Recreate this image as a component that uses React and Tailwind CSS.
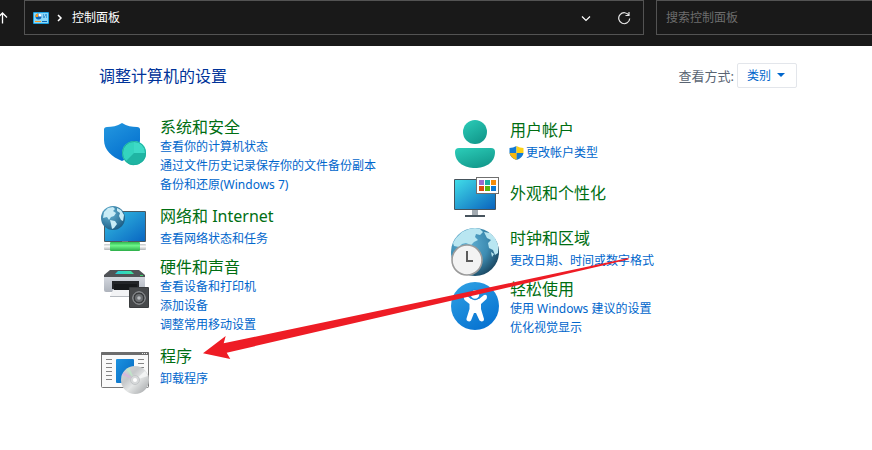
import React from "react";

const iconClass = "block w-12 h-[51px] shrink-0";

function Continents() {
  return (
    <g fill="#c9ecf6">
      <path d="M3 6 L7 2 L12 1 L14 3 L12 5 L15 7 L13 10 L10 11 L8 14 L6 11 L2 12 Z" />
      <path d="M9 14 L14 15 L16 18 L13 22 L11 23 L10 18 Z" />
      <path d="M16 2 L20 4 L23 9 L22 15 L20 14 L18 10 L19 7 L16 5 Z" />
    </g>
  );
}

function ShieldIcon() {
  return (
    <svg className={iconClass} viewBox="0 0 48 51" aria-hidden="true">
      <defs>
        <linearGradient id="shieldBlue" x1="0" y1="0" x2="0.6" y2="1">
          <stop offset="0" stopColor="#2498e0" />
          <stop offset="1" stopColor="#0470ce" />
        </linearGradient>
      </defs>
      <path d="M21 6 C26 9.500 31 10 36 10 Q39 10 39 12.500 V23 C39 33 31 40 21 44 C11 40 3 33 3 23 V12.500 Q3 10 6 10 C11 10 16 9.500 21 6 Z" fill="url(#shieldBlue)" />
      <circle cx="33" cy="36" r="12" fill="#34d4bf" />
      <path d="M33 24 A12 12 0 0 1 45 36 H33 Z" fill="#3ddac6" />
      <path d="M33 36 H45 A12 12 0 0 1 24.500 44.500 Z" fill="#1fb5a3" />
      <circle cx="33" cy="36" r="11.500" fill="none" stroke="#1fae9c" />
    </svg>
  );
}

function NetworkIcon() {
  return (
    <svg className={iconClass} viewBox="0 0 48 51" aria-hidden="true">
      <defs>
        <linearGradient id="netScreen" x1="0" y1="0" x2="1" y2="1">
          <stop offset="0" stopColor="#35bfe2" />
          <stop offset="1" stopColor="#0966c2" />
        </linearGradient>
        <radialGradient id="netGlobe" cx="0.35" cy="0.3" r="0.8">
          <stop offset="0" stopColor="#68b7d8" />
          <stop offset="1" stopColor="#17577f" />
        </radialGradient>
        <linearGradient id="netCable" x1="0" y1="0" x2="0" y2="1">
          <stop offset="0" stopColor="#2fb94f" />
          <stop offset="0.4" stopColor="#6df589" />
          <stop offset="1" stopColor="#2cae48" />
        </linearGradient>
        <linearGradient id="netPipe" x1="0" y1="0" x2="0" y2="1">
          <stop offset="0" stopColor="#bfc3c5" />
          <stop offset="0.4" stopColor="#fafafa" />
          <stop offset="1" stopColor="#b0b4b7" />
        </linearGradient>
      </defs>
      <rect x="3" y="5" width="42" height="31" rx="1" fill="#4b5960" />
      <rect x="4" y="6" width="40" height="29" fill="url(#netScreen)" />
      <rect x="21" y="35" width="6" height="3" fill="#707b80" />
      <rect x="3" y="38" width="42" height="6" rx="1" fill="url(#netPipe)" />
      <rect x="9" y="36" width="30" height="9" rx="1" fill="url(#netCable)" />
      <circle cx="12" cy="12" r="12" fill="url(#netGlobe)" />
      <Continents />
    </svg>
  );
}

function PrinterIcon() {
  return (
    <svg className={iconClass} viewBox="0 0 48 51" aria-hidden="true">
      <defs>
        <linearGradient id="printBody" x1="0" y1="0" x2="0" y2="1">
          <stop offset="0" stopColor="#d3d7de" />
          <stop offset="1" stopColor="#aeb3bc" />
        </linearGradient>
        <linearGradient id="printGlow" x1="0" y1="0" x2="1" y2="0">
          <stop offset="0" stopColor="#28c9d8" />
          <stop offset="1" stopColor="#3ee49c" />
        </linearGradient>
      </defs>
      <path d="M9 13 H38 L44 18 V21 H3 V18 Z" fill="#505357" />
      <path d="M17 14 H30 L33 17 H14 Z" fill="url(#printGlow)" />
      <path d="M3 20 H44 V33 Q44 35 42 35 H5 Q3 35 3 33 Z" fill="url(#printBody)" />
      <rect x="39" y="18" width="3" height="1" fill="#3fd06a" />
      <rect x="11" y="24" width="27" height="8" fill="#232528" />
      <rect x="13" y="27" width="23" height="8" fill="#17191b" />
      <path d="M12 33 H29 V39 H9 Z" fill="#f2f3f5" />
      <path d="M9 39 H29 V40 H9 Z" fill="#b5b9bf" />
      <rect x="28" y="30" width="20" height="21" rx="1" fill="#393b3d" />
      <rect x="29" y="31" width="18" height="19" fill="#47494b" />
      <circle cx="38" cy="41" r="6.200" fill="#3a3c3e" stroke="#a5a8ab" />
      <circle cx="38" cy="41" r="4" fill="#6c6f72" />
      <circle cx="38" cy="41" r="1.800" fill="#b9bcbf" />
    </svg>
  );
}

function ProgramsIcon() {
  return (
    <svg className={iconClass} viewBox="0 0 48 51" aria-hidden="true">
      <defs>
        <linearGradient id="progBlue" x1="0" y1="0" x2="1" y2="1">
          <stop offset="0" stopColor="#1b92e0" />
          <stop offset="1" stopColor="#0667bf" />
        </linearGradient>
        <linearGradient id="progDisc" x1="0" y1="0" x2="1" y2="1">
          <stop offset="0" stopColor="#d8dadb" />
          <stop offset="0.35" stopColor="#c6c8ca" />
          <stop offset="0.55" stopColor="#e4e6e6" />
          <stop offset="1" stopColor="#9ea1a3" />
        </linearGradient>
      </defs>
      <rect x="0.500" y="6.500" width="47" height="35" rx="1" fill="#fafafa" stroke="#777" />
      <path d="M0 9 V7 Q0 6 1 6 H47 Q48 6 48 7 V9 Z" fill="#6d6d6d" />
      <path d="M41 7.500 H46" stroke="#eee" strokeDasharray="1 1" />
      <path d="M5 13.500 H11 M5 17.500 H11 M5 21.500 H11 M5 25.500 H11 M5 29.500 H11 M5 33.500 H11 M37 13.500 H43 M37 17.500 H43 M38 21.500 H43" stroke="#858585" />
      <rect x="15" y="13" width="18" height="24" rx="1" fill="url(#progBlue)" />
      <circle cx="34" cy="34" r="14" fill="url(#progDisc)" />
      <path d="M34 34 L21 29 L23 26 Z" fill="#d9b3dc" opacity="0.8" />
      <path d="M34 34 L25 23.500 L28 21.500 Z" fill="#bfe8c8" opacity="0.8" />
      <path d="M34 34 L44 25 L47 30 Z" fill="#f6f7f7" opacity="0.8" />
      <circle cx="34" cy="34" r="4.500" fill="#d7d9da" stroke="#c3c6c8" />
      <circle cx="34" cy="34" r="2" fill="#fff" />
    </svg>
  );
}

function UserIcon() {
  return (
    <svg className={iconClass} viewBox="0 0 48 51" aria-hidden="true">
      <defs>
        <linearGradient id="userTeal" x1="0.1" y1="0" x2="0.7" y2="1">
          <stop offset="0" stopColor="#2bcbb7" />
          <stop offset="1" stopColor="#12988b" />
        </linearGradient>
      </defs>
      <circle cx="24" cy="12" r="12" fill="url(#userTeal)" />
      <path d="M8 28 H40 Q44 28 44 32 C44 43 34 48 24 48 C14 48 4 43 4 32 Q4 28 8 28 Z" fill="url(#userTeal)" />
    </svg>
  );
}

function AppearanceIcon() {
  return (
    <svg className={iconClass} viewBox="0 0 48 51" aria-hidden="true">
      <defs>
        <linearGradient id="appScreen" x1="0" y1="0" x2="1" y2="1">
          <stop offset="0" stopColor="#40dce8" />
          <stop offset="1" stopColor="#0a63bd" />
        </linearGradient>
      </defs>
      <rect x="21" y="39" width="6" height="5" fill="#a3abb1" />
      <rect x="14" y="44" width="20" height="2" fill="#47545d" />
      <rect x="3" y="8" width="42" height="31" rx="1" fill="#45535c" />
      <rect x="4" y="9" width="40" height="29" fill="url(#appScreen)" />
      <rect x="25.500" y="6.500" width="22" height="16" fill="#fff" stroke="#6f6f6f" />
      <rect x="28" y="9" width="5" height="5" fill="#9a6bd0" />
      <rect x="34" y="9" width="5" height="5" fill="#19b0a2" />
      <rect x="40" y="9" width="5" height="5" fill="#f48c0a" />
      <rect x="28" y="15" width="5" height="5" fill="#dc4a10" />
      <rect x="34" y="15" width="5" height="5" fill="#5bb40d" />
      <rect x="40" y="15" width="5" height="5" fill="#0a78d4" />
    </svg>
  );
}

function ClockIcon() {
  return (
    <svg className={iconClass} viewBox="0 0 48 51" aria-hidden="true">
      <defs>
        <radialGradient id="clockGlobe" cx="0.35" cy="0.35" r="0.7">
          <stop offset="0" stopColor="#61b1d4" />
          <stop offset="0.6" stopColor="#3d8cb2" />
          <stop offset="1" stopColor="#1c4b66" />
        </radialGradient>
      </defs>
      <circle cx="24" cy="24" r="24" fill="url(#clockGlobe)" />
      <g fill="#b9e6f1">
        <path d="M5 10 L11 4 L18 1 L24 0 L29 1 L32 4 L29 7 L25 6 L24 9 L27 12 L23 14 L20 17 L15 15 L11 16 L8 19 L3 18 L2 15 Z" />
        <path d="M33 4 L39 5 L44 10 L47 17 L47 25 L44 27 L42 22 L38 20 L37 15 L40 12 L36 10 Z" />
        <path d="M40 24 L43 26 L41 29 Z" />
      </g>
      <circle cx="16" cy="32" r="15" fill="#f3f3f3" stroke="#9b9b9b" strokeWidth="1.600" />
      <path d="M16 23 V33 H22" fill="none" stroke="#5c5c5c" strokeWidth="2" />
    </svg>
  );
}

function EaseIcon() {
  return (
    <svg className={iconClass} viewBox="0 0 48 51" aria-hidden="true">
      <defs>
        <linearGradient id="easeBlue" x1="0.2" y1="0" x2="0.8" y2="1">
          <stop offset="0" stopColor="#2d9fe3" />
          <stop offset="1" stopColor="#0470d0" />
        </linearGradient>
      </defs>
      <circle cx="24" cy="27" r="24" fill="url(#easeBlue)" />
      <path d="M12.500 18 Q13 16 15.500 16.500 L20 20 H28 L33 16 Q36 15 36 18 L35.500 20 L30 25 V30 L33 40 Q33 42.500 30.500 42.500 L28.500 41.500 L25 34 H23 L20 41.500 Q18.500 43 16.500 42 Q15 41 15.500 39.500 L18.500 30 V25 L13.500 21 Z" fill="#fff" />
      <circle cx="24" cy="15.500" r="5" fill="#fff" stroke="#1c8bda" strokeWidth="1.500" />
    </svg>
  );
}

function UacShield() {
  return (
    <svg className="mr-0.5 -ml-px block h-[14px] w-[15px] shrink-0" viewBox="0 0 15 14" aria-hidden="true">
      <path d="M7.500 0 Q4 2 0.500 2 V7 Q1 11.500 7.500 14 Z" fill="#137ad3" />
      <path d="M7.500 0 Q11 2 14.500 2 V7 H7.500 Z" fill="#fcd116" />
      <path d="M14.500 7 Q14 11.500 7.500 14 V7 Z" fill="#137ad3" />
      <path d="M0.500 7 H7.500 V14 Q1.500 11.500 0.500 7 Z" fill="#f7b80c" />
    </svg>
  );
}

function ControlPanelIcon() {
  return (
    <svg className="block h-3 w-4 shrink-0" viewBox="0 0 16 12" aria-hidden="true">
      <rect width="16" height="12" rx="1" fill="#1ba0e2" />
      <rect x="1" y="1" width="14" height="10" fill="#8ad8f7" />
      <circle cx="5.500" cy="4.500" r="3" fill="#0b64b8" />
      <path d="M5.500 4.500 V1.500 A3 3 0 0 1 8.500 4.500 Z" fill="#fff" />
      <path d="M5 5 V1.500 A3 3 0 0 0 2.500 5 Z" fill="#f79a1e" />
      <path d="M10 3 H11 M12 3 H14 M10 5 H12 M13 5 H14" stroke="#0b64b8" />
      <rect x="2" y="9" width="6" height="1" fill="#f79a1e" />
      <rect x="9" y="9" width="5" height="1" fill="#0b64b8" />
    </svg>
  );
}

function Category({ icon, title, links, pad = "" }) {
  const several = links.length > 1;
  return (
    <section className={"flex min-h-[51px] gap-[11px] " + pad}>
      {icon}
      <div className="min-w-0">
        <h2 className="text-base leading-5">
          <a href="#" className="text-[#006e12] hover:underline">{title}</a>
        </h2>
        <ul className={several ? "" : "pt-[3px]"}>
          {links.map((link) => (
            <li key={link.text} className="text-xs leading-[19px]">
              <a href="#" className="flex items-center whitespace-nowrap text-[#0066cc] hover:underline">
                {link.shield && <UacShield />}
                {link.text}
              </a>
            </li>
          ))}
        </ul>
      </div>
    </section>
  );
}

export default function App() {
  return (
    <div className="relative min-h-screen overflow-hidden bg-white font-['Noto_Sans','Noto_Sans_CJK_SC',sans-serif]">
      <header className="flex h-[46px] items-start bg-[#191919] text-xs text-white">
        <button type="button" aria-label="上移" className="h-[35px] w-6 shrink-0">
          <svg className="-ml-1 block h-3 w-3" viewBox="0 0 12 12" fill="none" stroke="#fff" strokeWidth="1.300" aria-hidden="true">
            <path d="M6.500 11.500 V1 M2 5.500 L6.500 1 L11 5.500" />
          </svg>
        </button>
        <nav className="flex h-[35px] min-w-0 flex-1 items-center border border-[#535353] pr-3 pl-2">
          <ControlPanelIcon />
          <svg className="mr-[7px] ml-1.5 block h-2 w-2.5" viewBox="0 0 10 8" fill="none" stroke="#fff" strokeWidth="1.500" aria-hidden="true">
            <path d="M3 1 L6 4 L3 7" />
          </svg>
          <button type="button" className="leading-4">控制面板</button>
          <button type="button" aria-label="历史记录" className="mr-[26px] ml-auto">
            <svg className="block h-2.5 w-2.5" viewBox="0 0 10 10" fill="none" stroke="#fff" strokeWidth="1.200" aria-hidden="true">
              <path d="M1 3.500 L5 7.500 L9 3.500" />
            </svg>
          </button>
          <button type="button" aria-label="刷新">
            <svg className="block h-[14px] w-[14px]" viewBox="0 0 14 14" fill="none" stroke="#e6e6e6" strokeWidth="1.200" aria-hidden="true">
              <path d="M12 4.500 A5.500 5.500 0 1 0 12.700 7.500 M12 1 V4.500 H8.500" />
            </svg>
          </button>
        </nav>
        <input
          type="search"
          aria-label="搜索控制面板"
          placeholder="搜索控制面板"
          className="ml-3 h-[35px] w-[216px] shrink-0 border border-r-0 border-[#535353] bg-transparent px-[9px] text-xs placeholder:text-[#6d6d6d]"
        />
      </header>

      <main className="pr-[75px] pl-[99px]">
        <div className="flex items-center justify-between pt-[17px] pb-[29px]">
          <h1 className="text-base leading-6 text-[#003399]">调整计算机的设置</h1>
          <div className="flex items-center gap-[3px]">
            <label htmlFor="view" className="text-[13px] leading-5 text-[#5a6472]">查看方式:</label>
            <div className="relative">
              <select
                id="view"
                className="block h-[25px] w-[60px] appearance-none rounded-xs border border-[#e3e6eb] bg-white pl-[9px] text-xs text-[#0066cc]"
              >
                <option>类别</option>
                <option>大图标</option>
                <option>小图标</option>
              </select>
              <svg className="pointer-events-none absolute top-2.5 right-3 h-1 w-2" viewBox="0 0 8 4" aria-hidden="true">
                <path d="M0 0 H8 L4 4 Z" fill="#0066cc" />
              </svg>
            </div>
          </div>
        </div>

        <div className="grid grid-cols-2 gap-1 pl-0.5">
          <div>
            <Category
              icon={<ShieldIcon />}
              title="系统和安全"
              pad="pb-3"
              links={[
                { text: "查看你的计算机状态" },
                { text: "通过文件历史记录保存你的文件备份副本" },
                { text: "备份和还原(Windows 7)" },
              ]}
            />
            <Category icon={<NetworkIcon />} title="网络和 Internet" links={[{ text: "查看网络状态和任务" }]} />
            <Category
              icon={<PrinterIcon />}
              title="硬件和声音"
              pad="pb-3"
              links={[{ text: "查看设备和打印机" }, { text: "添加设备" }, { text: "调整常用移动设置" }]}
            />
            <Category icon={<ProgramsIcon />} title="程序" links={[{ text: "卸载程序" }]} />
          </div>
          <div className="pt-[3px]">
            <Category icon={<UserIcon />} title="用户帐户" links={[{ text: "更改帐户类型", shield: true }]} />
            <section className="flex min-h-[57px] gap-[11px]">
              <AppearanceIcon />
              <h2 className="pt-3 text-base leading-5">
                <a href="#" className="text-[#006e12] hover:underline">外观和个性化</a>
              </h2>
            </section>
            <Category icon={<ClockIcon />} title="时钟和区域" links={[{ text: "更改日期、时间或数字格式" }]} />
            <Category
              icon={<EaseIcon />}
              title="轻松使用"
              links={[{ text: "使用 Windows 建议的设置" }, { text: "优化视觉显示" }]}
            />
          </div>
        </div>
      </main>

      <svg className="pointer-events-none absolute top-[250px] left-[200px] h-[120px] w-[440px]" viewBox="200 250 440 120" aria-hidden="true">
        <path d="M203 353.300 L225.700 336 L223.700 343.300 L450 295.700 L628.500 258 V259.500 L451 300.700 L226.700 352.700 L230.300 359 Z" fill="#ee1c25" />
      </svg>
    </div>
  );
}
